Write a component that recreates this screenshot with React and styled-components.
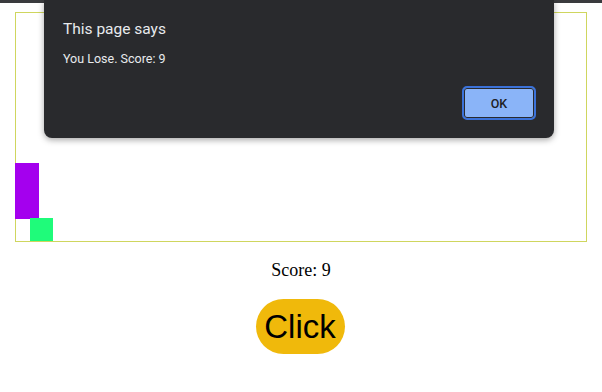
import React from "react";
import styled, { createGlobalStyle } from "styled-components";

const GlobalStyle = createGlobalStyle`
  body {
    margin: 0;
    background: #ffffff;
    font-family: "Liberation Serif", serif;
  }
`;

const Page = styled.div`
  position: relative;
  width: 602px;
  height: 392px;
  overflow: hidden;
  display: flex;
  flex-direction: column;
  align-items: center;
`;

const TopEdge = styled.div`
  position: absolute;
  top: 0;
  left: 0;
  right: 0;
  height: 3px;
  background: #3a3b3e;
`;

const Board = styled.div`
  position: relative;
  margin-top: 12px;
  margin-left: -1px;
  width: 570px;
  height: 228px;
  border: 1px solid #cfd65e;
`;

const Block = styled.div`
  position: absolute;
  background: ${(p) => p.color};
`;

const Score = styled.div`
  margin-top: 18px;
  font-size: 18px;
  line-height: 20px;
  color: #000;
`;

const ClickButton = styled.button`
  margin-top: 19px;
  margin-left: -2px;
  width: 89px;
  height: 55px;
  border: none;
  border-radius: 28px;
  background: #f0b90b;
  color: #000;
  font-family: "Liberation Sans", Arial, sans-serif;
  font-size: 33px;
  padding: 0;
  cursor: pointer;
`;

const Dialog = styled.div`
  position: absolute;
  top: 0;
  left: 44px;
  width: 510px;
  height: 138px;
  box-sizing: border-box;
  background: #292a2d;
  border-radius: 0 0 8px 8px;
  box-shadow: 0 2px 6px rgba(0, 0, 0, 0.35);
  padding: 19px 18px 18px 19px;
  display: flex;
  flex-direction: column;
  font-family: Roboto, "Noto Sans", sans-serif;
  color: #e8eaed;
`;

const DialogTitle = styled.div`
  font-size: 15.5px;
  line-height: 20px;
`;

const DialogMessage = styled.div`
  margin-top: 11px;
  font-size: 12.5px;
  line-height: 18px;
`;

const DialogActions = styled.div`
  margin-top: auto;
  display: flex;
  justify-content: flex-end;
`;

const OkButton = styled.button`
  width: 74px;
  height: 34px;
  box-sizing: border-box;
  border: 2px solid #3b72d9;
  border-radius: 5px;
  box-shadow: inset 0 0 0 1px #292a2d;
  background: #8ab4f8;
  color: #202124;
  font-family: Roboto, "Noto Sans", sans-serif;
  font-size: 12.5px;
  font-weight: 500;
  padding: 0;
`;

export default function App() {
  return (
    <Page>
      <GlobalStyle />
      <Board>
        <Block color="#a400ee" style={{ left: -1, top: 150, width: 24, height: 56 }} />
        <Block color="#1ffb7a" style={{ left: 14, top: 205, width: 23, height: 23 }} />
      </Board>
      <Score>Score: 9</Score>
      <ClickButton>Click</ClickButton>
      <TopEdge />
      <Dialog>
        <DialogTitle>This page says</DialogTitle>
        <DialogMessage>You Lose. Score: 9</DialogMessage>
        <DialogActions>
          <OkButton>OK</OkButton>
        </DialogActions>
      </Dialog>
    </Page>
  );
}
